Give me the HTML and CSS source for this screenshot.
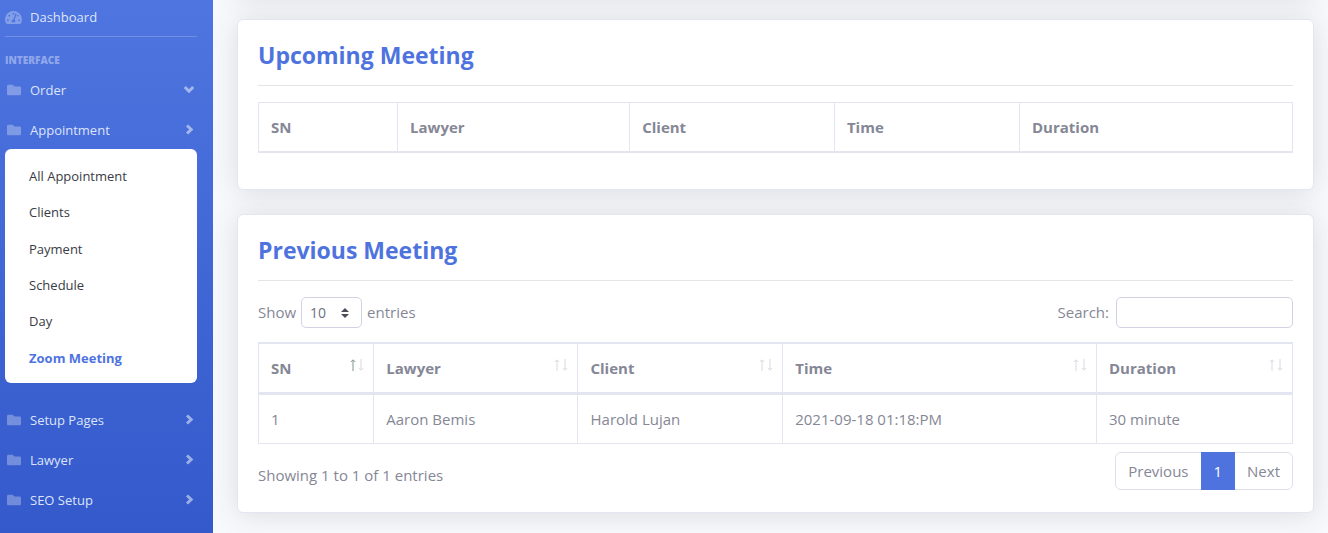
FILE: index.html
```html
<!DOCTYPE html>
<html lang="en">
<head>
<meta charset="utf-8">
<meta name="viewport" content="width=device-width, initial-scale=1">
<title>Zoom Meeting</title>
<link rel="stylesheet" href="styles.css">
</head>
<body>
<svg class="sprite" aria-hidden="true">
  <symbol id="folder" viewBox="0 0 512 512"><path d="M464 128H272l-64-64H48C21.500 64 0 85.500 0 112v288c0 26.500 21.500 48 48 48h416c26.500 0 48-21.500 48-48V176c0-26.500-21.500-48-48-48z"/></symbol>
  <symbol id="right" viewBox="0 0 12 12"><path d="M4 1.500 8.200 5.500l-4.200 4"/></symbol>
  <symbol id="down" viewBox="0 0 12 12"><path d="M1.800 3 6 7.200 10.200 3"/></symbol>
  <symbol id="sort" viewBox="0 0 14 12"><path class="up" d="M3 12V1M.8 3 3 .8 5.200 3"/><path class="dn" d="M11 0V11M8.800 9 11 11.200 13.200 9"/></symbol>
</svg>
<div class="layout">
  <nav class="sidebar">
    <a class="nav-row dashboard" href="#">
      <svg class="gauge" viewBox="0 0 576 512"><path d="M288 32C128.940 32 0 160.940 0 320c0 52.800 14.250 102.260 39.060 144.800 5.610 9.620 16.300 15.200 27.440 15.200h443c11.140 0 21.830-5.580 27.440-15.200C561.750 422.260 576 372.800 576 320c0-159.060-128.940-288-288-288zm0 64c14.710 0 26.580 10.130 30.320 23.650-1.110 2.260-2.640 4.230-3.450 6.670l-9.220 27.670c-5.130 3.490-10.970 6.010-17.640 6.010-17.670 0-32-14.330-32-32S270.330 96 288 96zM96 384c-17.670 0-32-14.330-32-32s14.330-32 32-32 32 14.330 32 32-14.330 32-32 32zm48-160c-17.670 0-32-14.330-32-32s14.330-32 32-32 32 14.330 32 32-14.330 32-32 32zm246.770-72.410l-61.330 184C343.130 347.330 352 364.540 352 384c0 11.720-3.380 22.550-8.880 32H232.880c-5.500-9.450-8.880-20.280-8.880-32 0-33.940 26.500-61.430 59.900-63.590l61.340-184.010c4.170-12.560 17.730-19.450 30.360-15.170 12.570 4.190 19.350 17.790 15.170 30.360zm14.660 57.200l15.520-46.550c3.470-1.290 7.130-2.230 11.050-2.230 17.670 0 32 14.330 32 32s-14.330 32-32 32c-11.380-.010-20.890-6.280-26.570-15.220zM480 384c-17.670 0-32-14.330-32-32s14.330-32 32-32 32 14.330 32 32-14.330 32-32 32z"/></svg>
      <span>Dashboard</span>
    </a>
    <hr class="nav-line">
    <div class="nav-heading">Interface</div>
    <button class="nav-row" type="button"><svg class="folder"><use href="#folder"/></svg><span>Order</span><svg class="chev"><use href="#down"/></svg></button>
    <button class="nav-row" type="button" aria-expanded="true"><svg class="folder"><use href="#folder"/></svg><span>Appointment</span><svg class="chev"><use href="#right"/></svg></button>
    <div class="submenu">
      <a href="#">All Appointment</a>
      <a href="#">Clients</a>
      <a href="#">Payment</a>
      <a href="#">Schedule</a>
      <a href="#">Day</a>
      <a href="#" class="active">Zoom Meeting</a>
    </div>
    <button class="nav-row" type="button"><svg class="folder"><use href="#folder"/></svg><span>Setup Pages</span><svg class="chev"><use href="#right"/></svg></button>
    <button class="nav-row" type="button"><svg class="folder"><use href="#folder"/></svg><span>Lawyer</span><svg class="chev"><use href="#right"/></svg></button>
    <button class="nav-row" type="button"><svg class="folder"><use href="#folder"/></svg><span>SEO Setup</span><svg class="chev"><use href="#right"/></svg></button>
  </nav>
  <main class="content">
    <div class="card card-above"></div>
    <section class="card">
      <h1>Upcoming Meeting</h1>
      <hr>
      <table class="upcoming">
        <colgroup><col class="u1"><col class="u2"><col class="u3"><col class="u4"><col></colgroup>
        <thead><tr><th>SN</th><th>Lawyer</th><th>Client</th><th>Time</th><th>Duration</th></tr></thead>
      </table>
    </section>
    <section class="card">
      <h1>Previous Meeting</h1>
      <hr>
      <div class="toolbar">
        <div class="field"><label for="len">Show</label>
          <span class="select"><select id="len"><option>10</option><option>25</option><option>50</option></select><svg viewBox="0 0 8 10"><path d="M4 0 0 4h8zM4 10 0 6h8z"/></svg></span>
          <span>entries</span></div>
        <div class="field search"><label for="q">Search:</label><input id="q" type="search"></div>
      </div>
      <table class="previous">
        <colgroup><col class="p1"><col class="p2"><col class="p3"><col class="p4"><col></colgroup>
        <thead><tr>
          <th><button type="button" class="asc">SN<svg><use href="#sort"/></svg></button></th>
          <th><button type="button">Lawyer<svg><use href="#sort"/></svg></button></th>
          <th><button type="button">Client<svg><use href="#sort"/></svg></button></th>
          <th><button type="button">Time<svg><use href="#sort"/></svg></button></th>
          <th><button type="button">Duration<svg><use href="#sort"/></svg></button></th>
        </tr></thead>
        <tbody><tr><td>1</td><td>Aaron Bemis</td><td>Harold Lujan</td><td>2021-09-18 01:18:PM</td><td>30 minute</td></tr></tbody>
      </table>
      <div class="footer">
        <div>Showing 1 to 1 of 1 entries</div>
        <div class="pages"><button type="button">Previous</button><button type="button" class="current">1</button><button type="button">Next</button></div>
      </div>
    </section>
  </main>
</div>
</body>
</html>
```

FILE: styles.css
```css
* { box-sizing: border-box; }
body {
  margin: 0;
  background: #f8f9fc;
  color: #858796;
  font: 15px/24px "Open Sans", "Noto Sans", sans-serif;
}
button, input, select { font: inherit; color: inherit; }
button { background: none; border: 0; padding: 0; cursor: pointer; }
a { text-decoration: none; }
hr { margin: 16px 0; border: 0; border-top: 1px solid #e3e4e8; }
.sprite { display: none; }
.layout { display: flex; min-height: 100vh; overflow: hidden; }

.sidebar {
  flex: none;
  width: 213px;
  padding: 0 16px 13px 5px;
  background: linear-gradient(180deg, #4f75e0, #3359cb);
}
.nav-row {
  display: flex;
  align-items: center;
  width: 100%;
  height: 40px;
  color: #dde4f9;
  font-size: 13px;
  text-align: left;
}
.nav-row span { flex: 1; }
.nav-row.dashboard { height: 36px; padding-bottom: 2px; }
.folder { width: 14px; height: 14px; margin: 0 9px 0 2px; fill: #fff; opacity: .3; }
.gauge { width: 17px; height: 15px; margin: 0 8px 0 0; fill: #fff; opacity: .3; }
.chev { width: 12px; height: 12px; margin-right: 2px; fill: none; stroke: #fff; stroke-width: 3; opacity: .5; }
.nav-line { margin: 0; border-color: rgba(255, 255, 255, .2); }
.nav-heading {
  padding: 13px 0 0;
  height: 33px;
  font-size: 10px;
  line-height: 20px;
  font-weight: 800;
  text-transform: uppercase;
  color: rgba(255, 255, 255, .4);
}
.submenu {
  display: grid;
  grid-auto-rows: 1fr;
  min-height: 234px;
  margin: -1px 0 17px;
  padding: 9px 24px 7px;
  border-radius: 6px;
  background: #fff;
}
.submenu a { display: flex; align-items: center; color: #3a3b45; font-size: 13px; }
.submenu .active { color: #4e73df; font-weight: 700; }

.content { flex: 1; min-width: 0; padding: 0 14px 0 24px; }
.card {
  margin-bottom: 24px;
  padding: 20px;
  border: 1px solid #e3e6f0;
  border-radius: 6px;
  background: #fff;
  box-shadow: 0 2px 28px rgba(58, 59, 69, .15);
}
.card-above { margin-top: -47px; }
.card h1 { margin: 0; padding-top: 2px; color: #4e73df; font-size: 23px; line-height: 27px; font-weight: 700; }

table { width: 100%; table-layout: fixed; border-spacing: 0; border-right: 1px solid #e3e6f0; }
th, td { padding: 12px; border-left: 1px solid #e3e6f0; text-align: left; }
th { border-top: 1px solid #e3e6f0; border-bottom: 2px solid #e3e6f0; font-weight: 700; }
.upcoming { margin-bottom: 16px; }
.previous { border-top: 1px solid #e3e6f0; border-bottom: 1px solid #e3e6f0; }
.previous td { border-top: 1px solid #e3e6f0; }
.previous th { padding-right: 9px; }
.u1 { width: 13.45%; } .u2 { width: 22.45%; } .u3 { width: 19.8%; } .u4 { width: 17.9%; }
.p1 { width: 11.15%; } .p2 { width: 19.75%; } .p3 { width: 19.8%; } .p4 { width: 30.35%; }
th button { display: flex; justify-content: space-between; width: 100%; height: 24px; font-weight: 700; }
th svg { width: 14px; height: 12px; margin-top: 3px; fill: none; stroke: #d8d9df; }
.asc svg { --up: #7f958f; }
.up { stroke: var(--up, #d8d9df); }

.toolbar, .footer { display: flex; justify-content: space-between; align-items: center; }
.toolbar { margin-bottom: 14px; }
.field { display: flex; align-items: center; gap: 5px; }
.field label, .field > span:last-child { padding-bottom: 2px; }
.search { gap: 7px; }
.select { display: grid; align-items: center; }
.select > * { grid-area: 1 / 1; }
.select select, .search input {
  height: 31px;
  border: 1px solid #d1d3e2;
  border-radius: 5px;
  background: #fff;
  appearance: none;
  font-size: 14px;
  padding: 0 8px;
}
.select select { width: 61px; color: #6e707e; }
.select svg { width: 8px; height: 10px; margin-right: 13px; justify-self: end; fill: #4a4d55; pointer-events: none; }
.search input { width: 177px; }

.footer { padding: 8px 0 2px; }
.footer > div:first-child { padding-top: 8px; }
.pages { display: flex; border: 1px solid #dddfeb; border-radius: 6px; }
.pages button { height: 36px; padding: 0 12px; }
.pages .current { height: 38px; margin: -1px 0; padding: 0 13px; background: #4e73df; color: #fff; }
```
